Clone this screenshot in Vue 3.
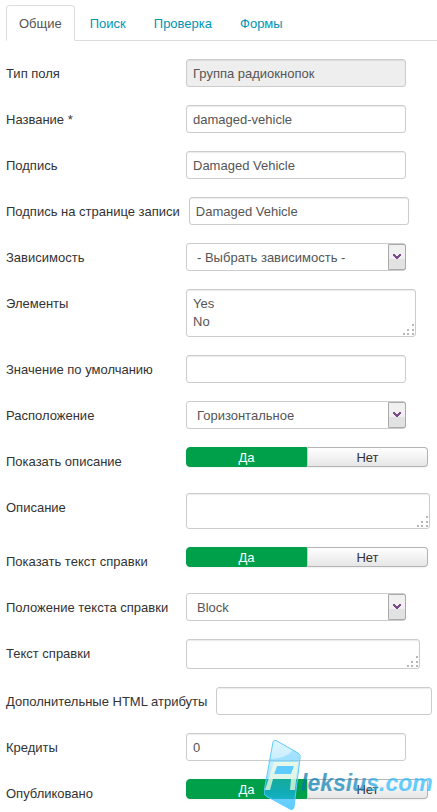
<template>
<div class="page">
  <nav class="tabs">
    <a v-for="tab in tabs" :key="tab" href="#" class="tab" :class="{ active: tab === activeTab }" @click.prevent="activeTab = tab">{{ tab }}</a>
  </nav>

  <form class="form" @submit.prevent>
    <div v-for="field in fields" :key="field.id" class="form-row">
      <span v-if="field.type === 'toggle'" class="form-label" :id="field.id + '-label'">{{ field.label }}</span>
      <label v-else class="form-label" :for="field.id">{{ field.label }}</label>

      <input v-if="field.type === 'text'" type="text" class="control" :id="field.id" v-model="field.value" :readonly="field.readonly" />

      <div v-else-if="field.type === 'select'" class="select-box">
        <select class="control" :id="field.id" v-model="field.value">
          <option>{{ field.value }}</option>
        </select>
        <span class="arrow">
          <svg width="8" height="6" viewBox="0 0 8 6">
            <path d="M0 0H2V1H3V2H5V1H6V0H8V2H7V3H6V4H5V5H3V4H2V3H1V2H0Z" fill="#7d4a8c" />
          </svg>
        </span>
      </div>

      <div v-else-if="field.type === 'area'" class="area-box" :class="field.size">
        <textarea class="control" :id="field.id" v-model="field.value"></textarea>
        <svg class="grip" width="12" height="12" viewBox="0 0 12 12" fill="#b8b8b8">
          <path d="M9 0h2v2h-2zM4 5h2v2h-2zM9 5h2v2h-2zM0 9h2v2h-2zM4 9h2v2h-2zM9 9h2v2h-2z" />
        </svg>
      </div>

      <div v-else class="toggle" role="radiogroup" :aria-labelledby="field.id + '-label'">
        <label v-for="option in ['Да', 'Нет']" :key="option" class="toggle-item" :class="{ checked: field.value === option }">
          <input type="radio" :name="field.id" :value="option" v-model="field.value" />
          {{ option }}
        </label>
      </div>
    </div>
  </form>

  <svg class="logo" width="173" height="74" viewBox="0 0 173 74">
    <defs>
      <linearGradient id="glass" x1="0" y1="0" x2="0" y2="1">
        <stop offset="0" stop-color="#36c1ff" stop-opacity="0.15" />
        <stop offset="0.45" stop-color="#36c1ff" stop-opacity="0.35" />
        <stop offset="0.75" stop-color="#1ab4ff" stop-opacity="0.6" />
        <stop offset="1" stop-color="#36c1ff" stop-opacity="0.8" />
      </linearGradient>
      <linearGradient id="letters" x1="0" x2="1">
        <stop offset="0" stop-color="#0078aa" />
        <stop offset="0.45" stop-color="#1688bb" />
        <stop offset="0.6" stop-color="#2ab9fa" />
        <stop offset="1" stop-color="#2abbff" />
      </linearGradient>
    </defs>
    <path d="M9 5Q10 2 13 4L34 16Q37 18 36 21L30 70Q29 74 26 72L2 59Q0 58 0 55Z" fill="url(#glass)" stroke="#5ccbff" />
    <path d="M5 22Q22 22 29 13L34 16Q36 18 35 22L34 25H4Z" fill="#6fd0ff" fill-opacity="0.45" />
    <path d="M13 29H30L27 37H10Z" fill="#5ccbff" />
    <path fill-rule="evenodd" d="M10 25H34L31 53H26L27 42H9L6 53H1ZM13 29L10 37H27L30 29Z" fill="#f2fbe0" fill-opacity="0.75" />
    <text x="37" y="54">leksius.com</text>
  </svg>
</div>
</template>

<script setup>
import {ref} from 'vue'

const tabs = ['Общие', 'Поиск', 'Проверка', 'Формы']
const activeTab = ref('Общие')

const fields = ref([
  { id: 'type', type: 'text', label: 'Тип поля', value: 'Группа радиокнопок', readonly: true },
  { id: 'name', type: 'text', label: 'Название *', value: 'damaged-vehicle' },
  { id: 'caption', type: 'text', label: 'Подпись', value: 'Damaged Vehicle' },
  { id: 'page-caption', type: 'text', label: 'Подпись на странице записи', value: 'Damaged Vehicle' },
  { id: 'dependency', type: 'select', label: 'Зависимость', value: '- Выбрать зависимость -' },
  { id: 'items', type: 'area', label: 'Элементы', value: 'Yes\nNo', size: 'items' },
  { id: 'default', type: 'text', label: 'Значение по умолчанию', value: '' },
  { id: 'layout', type: 'select', label: 'Расположение', value: 'Горизонтальное' },
  { id: 'show-desc', type: 'toggle', label: 'Показать описание', value: 'Да' },
  { id: 'desc', type: 'area', label: 'Описание', value: '', size: 'desc' },
  { id: 'show-help', type: 'toggle', label: 'Показать текст справки', value: 'Да' },
  { id: 'help-position', type: 'select', label: 'Положение текста справки', value: 'Block' },
  { id: 'help', type: 'area', label: 'Текст справки', value: '', size: 'help' },
  { id: 'attributes', type: 'text', label: 'Дополнительные HTML атрибуты', value: '' },
  { id: 'credits', type: 'text', label: 'Кредиты', value: '0' },
  { id: 'published', type: 'toggle', label: 'Опубликовано', value: 'Да' },
])
</script>

<style>
body {
  background: #fff;
}
</style>

<style scoped>
.page {
  position: relative;
  padding-top: 5px;
  padding-bottom: 4px;
  font-family: "Liberation Sans", Arial, sans-serif;
  font-size: 13px;
  line-height: 18px;
  color: #333;
}

.tabs {
  display: flex;
  gap: 2px;
  margin-left: 6px;
  border-bottom: 1px solid #ddd;
}

.tab {
  margin-bottom: -1px;
  padding: 9px 12px 7px;
  border: 1px solid transparent;
  border-radius: 4px 4px 0 0;
  color: #0095b6;
  text-decoration: none;
}

.tab.active {
  border-color: #ddd;
  border-bottom-color: #fff;
  background: #fff;
  color: #555;
}

.form {
  display: flex;
  flex-direction: column;
  gap: 18px;
  padding: 18px 5px 0 6px;
}

.form-row {
  display: flex;
  align-items: flex-start;
}

.form-label {
  flex: none;
  box-sizing: border-box;
  min-width: 180px;
  padding: 6px 9px 4px 0;
  white-space: nowrap;
}

.control {
  display: block;
  box-sizing: border-box;
  width: 220px;
  min-width: 0;
  height: 28px;
  margin: 0;
  padding: 4px 6px;
  border: 1px solid #ccc;
  border-radius: 3px;
  background: #fff;
  box-shadow: inset 0 1px 1px rgba(0, 0, 0, 0.08);
  color: #555;
  font: inherit;
}

.control[readonly] {
  background: #eee;
}

.select-box,
.area-box {
  position: relative;
}

select.control {
  appearance: none;
  padding: 5px 28px 3px 10px;
  box-shadow: none;
}

.arrow {
  position: absolute;
  top: 1px;
  right: 0;
  display: flex;
  align-items: center;
  justify-content: center;
  box-sizing: border-box;
  width: 18px;
  height: 26px;
  border: 1px solid #aaa;
  border-radius: 0 2px 2px 0;
  background: linear-gradient(#f0f0f0 60%, #e2e2e2 60%);
  pointer-events: none;
}

textarea.control {
  width: 100%;
  height: 100%;
  padding-top: 5px;
  resize: none;
  overflow: hidden;
}

.items {
  width: 230px;
  height: 48px;
}

.desc {
  width: 244px;
  height: 36px;
}

.help {
  width: 234px;
  height: 30px;
}

.grip {
  position: absolute;
  right: 1px;
  bottom: 1px;
  pointer-events: none;
}

.toggle {
  display: flex;
  width: 242px;
}

.toggle-item {
  flex: 1;
  box-sizing: border-box;
  height: 20px;
  border: 1px solid #b3b3b3;
  border-left-color: #ccc;
  border-radius: 0 4px 4px 0;
  background: linear-gradient(#fff, #e6e6e6);
  box-shadow: 0 1px 2px rgba(0, 0, 0, 0.05);
  line-height: 20px;
  text-align: center;
  cursor: pointer;
}

.toggle-item:first-child {
  border-radius: 4px 0 0 4px;
}

.toggle-item.checked {
  border-color: #009f4a;
  background: #009f4a;
  color: #fff;
}

.toggle-item input {
  position: absolute;
  margin: 0;
  opacity: 0;
  pointer-events: none;
}

.logo {
  position: absolute;
  left: 264px;
  bottom: 0;
  pointer-events: none;
}

.logo text {
  fill: url(#letters);
  fill-opacity: 0.72;
  font-family: "Liberation Sans", Arial, sans-serif;
  font-size: 23px;
  font-weight: bold;
  font-style: italic;
}
</style>
